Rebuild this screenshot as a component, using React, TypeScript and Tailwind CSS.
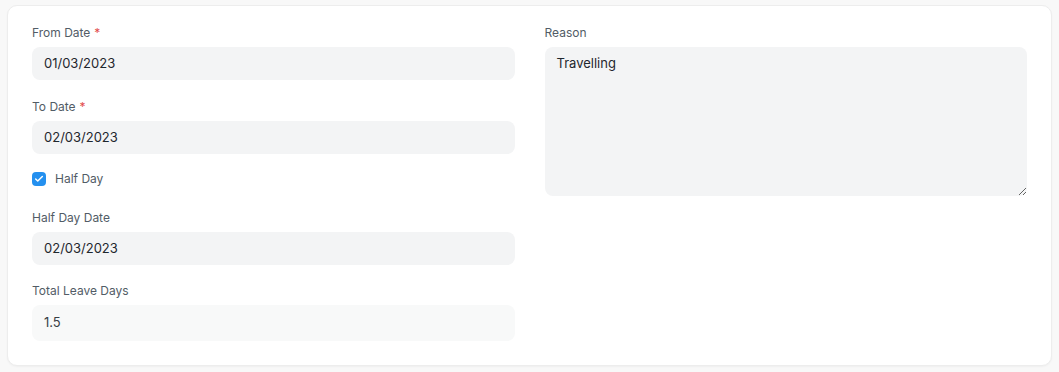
import { Check } from "lucide-react";

const Label = ({ text, required }: { text: string; required?: boolean }) => (
  <div className="h-[18px] text-[12px] leading-[18px] text-[#525c66] mb-[5px]">
    {text}
    {required && <span className="text-[#e24c4c] ml-[4px]">*</span>}
  </div>
);

const Input = ({ value, muted }: { value: string; muted?: boolean }) => (
  <div
    className={`rounded-lg px-3 flex items-center text-[13px] text-[#1f272e] ${
      muted ? "bg-[#f8f9f9] h-[36px] text-[#383f45]" : "bg-[#f3f4f5] h-[33px]"
    }`}
  >
    {value}
  </div>
);

export default function App() {
  return (
    <div
      className="w-[1059px] h-[372px] bg-[#f8f8f8] pt-[5px] px-[7px]"
      style={{ fontFamily: "Inter, 'Noto Sans', sans-serif" }}
    >
      <div className="h-[361px] bg-white rounded-[10px] border border-[#ededed] shadow-[0_1px_2px_rgba(0,0,0,0.04)] px-[24px] pt-[18px] grid grid-cols-2 gap-x-[30px]">
        {/* left column */}
        <div className="flex flex-col">
          <Label text="From Date" required />
          <Input value="01/03/2023" />

          <div className="mt-[18px]">
            <Label text="To Date" required />
            <Input value="02/03/2023" />
          </div>

          <div className="mt-[16px] h-[18px] flex items-center gap-[9px]">
            <span className="w-[14px] h-[14px] rounded-[4px] bg-[#2490ef] flex items-center justify-center">
              <Check className="w-[10px] h-[10px] text-white" strokeWidth={3.5} />
            </span>
            <span className="text-[12px] text-[#525c66]">Half Day</span>
          </div>

          <div className="mt-[21px]">
            <Label text="Half Day Date" />
            <Input value="02/03/2023" />
          </div>

          <div className="mt-[17px]">
            <Label text="Total Leave Days" />
            <Input value="1.5" muted />
          </div>
        </div>

        {/* right column */}
        <div className="flex flex-col">
          <Label text="Reason" />
          <textarea
            readOnly
            defaultValue="Travelling"
            className="h-[149px] w-full rounded-lg bg-[#f3f4f5] px-3 py-[7px] text-[13px] leading-[18px] text-[#1f272e] outline-none"
          />
        </div>
      </div>
    </div>
  );
}
